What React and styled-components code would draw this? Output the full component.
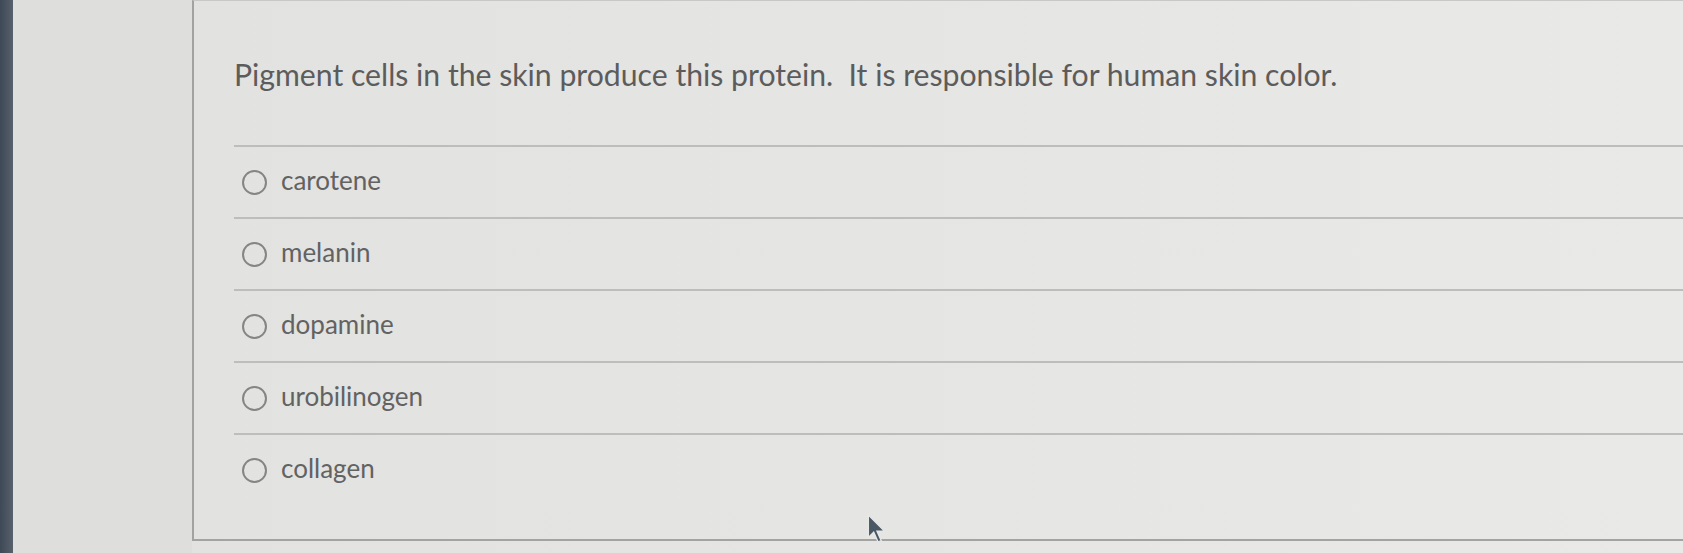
import React from "react";
import styled, { createGlobalStyle } from "styled-components";

const Global = createGlobalStyle`
  html, body { margin: 0; padding: 0; background: #e3e3e1; }
  body { font-family: Lato, "Open Sans", sans-serif; }
`;

const Page = styled.div`
  display: flex;
  width: 1683px;
  height: 553px;
  overflow: hidden;
  position: relative;
  background: #e4e4e2;
`;

const Strip = styled.div`
  width: 13px;
  flex: none;
  background: linear-gradient(90deg, #3e4956, #56616c);
`;

const Side = styled.div`
  width: 179px;
  flex: none;
  background: #dededc;
`;

const Main = styled.div`
  flex: 1;
  display: flex;
  flex-direction: column;
  background: linear-gradient(90deg, #e2e2e0 0%, #e6e6e4 60%, #e9e9e7 100%);
`;

const Box = styled.div`
  height: 541px;
  box-sizing: border-box;
  border-top: 1px solid #c8c8c6;
  border-left: 2px solid #a2a2a0;
  border-bottom: 2px solid #a3a3a1;
  padding-left: 40px;
  display: flex;
  flex-direction: column;
`;

const Question = styled.p`
  margin: 0;
  padding: 56px 0 54px;
  font-size: 30.2px;
  line-height: 34px;
  color: #5c5c5c;
  white-space: pre-wrap;
`;

const Options = styled.ul`
  list-style: none;
  margin: 0;
  padding: 0;
`;

const Option = styled.li`
  display: flex;
  align-items: center;
  gap: 14px;
  height: 72px;
  box-sizing: border-box;
  border-top: 2px solid #bdbdbb;
  padding-left: 8px;
  font-size: 26px;
  color: #626262;
`;

const Radio = styled.span`
  width: 25px;
  height: 25px;
  box-sizing: border-box;
  border-radius: 50%;
  border: 2px solid #858583;
  flex: none;
  margin-top: 1px;
`;

const Label = styled.span`
  line-height: 1;
  margin-top: -4px;
`;

const Below = styled.div`
  flex: 1;
`;

const Cursor = styled.svg`
  position: absolute;
  left: 866px;
  top: 514px;
`;

const answers = ["carotene", "melanin", "dopamine", "urobilinogen", "collagen"];

export default function App() {
  return (
    <>
      <Global />
      <Page>
        <Strip />
        <Side />
        <Main>
          <Box>
            <Question>
              {"Pigment cells in the skin produce this protein.  It is responsible for human skin color."}
            </Question>
            <Options>
              {answers.map((a) => (
                <Option key={a}>
                  <Radio />
                  <Label>{a}</Label>
                </Option>
              ))}
            </Options>
          </Box>
          <Below />
        </Main>
        <Cursor width="24" height="32" viewBox="0 0 22 30">
          <path d="M2 1 L2 22 L7 17 L11 26 L14 25 L10 16 L17 16 Z" fill="#4a5866" stroke="#e8e8e6" strokeWidth="1.2" />
        </Cursor>
      </Page>
    </>
  );
}
